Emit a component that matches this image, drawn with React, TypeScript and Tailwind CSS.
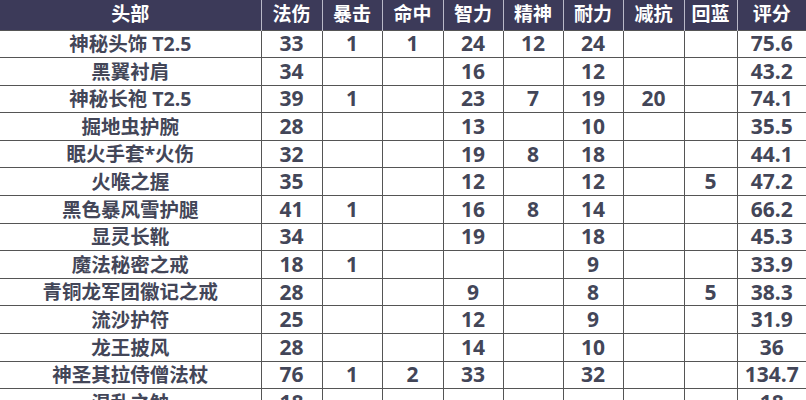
const headers = ["头部", "法伤", "暴击", "命中", "智力", "精神", "耐力", "减抗", "回蓝", "评分"];

const widths = ["w-[261px]", "w-[61px]", "w-[60px]", "w-[61px]", "w-[60px]", "w-[60px]", "w-[60px]", "w-[61px]", "w-[53px]", "w-[69px]"];

const rows: string[][] = [
  ["神秘头饰 T2.5", "33", "1", "1", "24", "12", "24", "", "", "75.6"],
  ["黑翼衬肩", "34", "", "", "16", "", "12", "", "", "43.2"],
  ["神秘长袍 T2.5", "39", "1", "", "23", "7", "19", "20", "", "74.1"],
  ["掘地虫护腕", "28", "", "", "13", "", "10", "", "", "35.5"],
  ["眠火手套*火伤", "32", "", "", "19", "8", "18", "", "", "44.1"],
  ["火喉之握", "35", "", "", "12", "", "12", "", "5", "47.2"],
  ["黑色暴风雪护腿", "41", "1", "", "16", "8", "14", "", "", "66.2"],
  ["显灵长靴", "34", "", "", "19", "", "18", "", "", "45.3"],
  ["魔法秘密之戒", "18", "1", "", "", "", "9", "", "", "33.9"],
  ["青铜龙军团徽记之戒", "28", "", "", "9", "", "8", "", "5", "38.3"],
  ["流沙护符", "25", "", "", "12", "", "9", "", "", "31.9"],
  ["龙王披风", "28", "", "", "14", "", "10", "", "", "36"],
  ["神圣其拉侍僧法杖", "76", "1", "2", "33", "", "32", "", "", "134.7"],
  ["混乱之触", "18", "", "", "", "", "", "", "", "18"],
];

export default function App() {
  return (
    <div className="h-[400px] w-[806px] overflow-hidden bg-white font-['Open_Sans','Noto_Sans_CJK_SC',sans-serif]">
      <table className="w-[806px] table-fixed border-collapse">
        <colgroup>
          {widths.map((w, i) => (
            <col key={i} className={w} />
          ))}
        </colgroup>
        <thead>
          <tr className="h-[30px] bg-[#3c3a59]">
            {headers.map((h, i) => (
              <th
                key={h}
                className={`p-0 text-center text-[19px] font-bold leading-none text-white ${
                  i > 0 ? "border-l border-[#b9b8c8]" : ""
                }`}
              >
                {h}
              </th>
            ))}
          </tr>
        </thead>
        <tbody>
          {rows.map((row, r) => (
            <tr key={r} className="h-[27.6px] border-t border-[#555]">
              {row.map((cell, i) => (
                <td
                  key={i}
                  className={`p-0 text-center font-bold leading-none text-[#434658] ${
                    i > 0 ? "border-l border-[#555] text-[21px]" : "text-[19.5px]"
                  }`}
                >
                  {cell}
                </td>
              ))}
            </tr>
          ))}
        </tbody>
      </table>
    </div>
  );
}
